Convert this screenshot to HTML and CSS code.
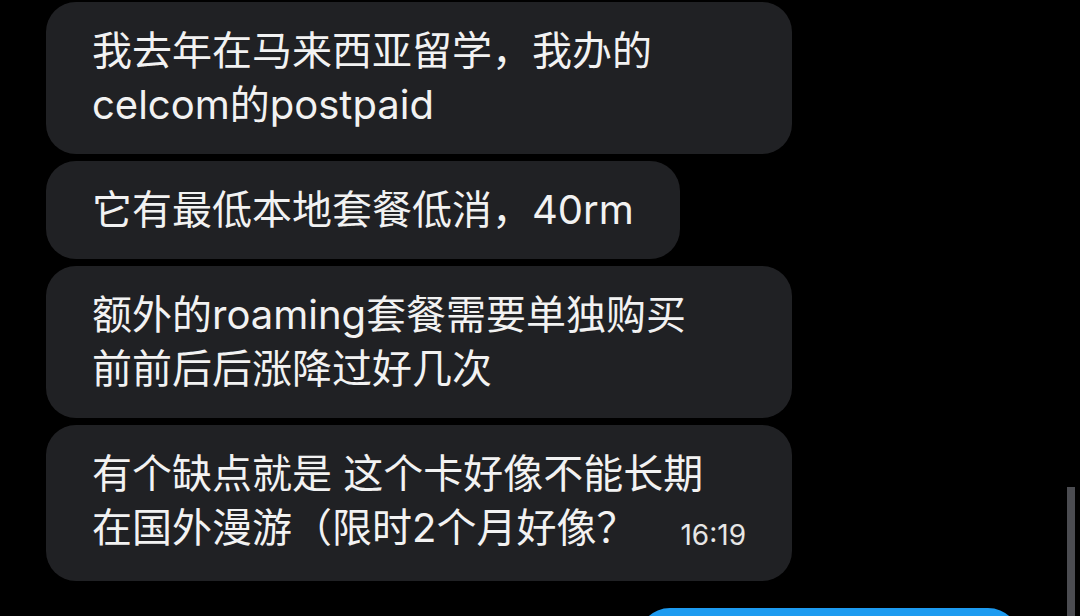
FILE: index.html
```html
<!DOCTYPE html>
<html lang="zh-CN">
    <head>
        <title>Messages</title>
        <meta charset="utf-8" />
        <meta name="viewport" content="width=device-width, initial-scale=1">
        <link rel="stylesheet" href="styles.css">
    </head>
    <body>
        <div class="thread">
            <div class="bubble wide">我去年在马来西亚留学，我办的<br>celcom的postpaid</div>
            <div class="bubble">它有最低本地套餐低消，40rm</div>
            <div class="bubble wide">额外的roaming套餐需要单独购买<br>前前后后涨降过好几次</div>
            <div class="bubble wide">
                有个缺点就是 这个卡好像不能长期
                <div class="last-line">
                    <span>在国外漫游（限时2个月好像？</span>
                    <span class="time">16:19</span>
                </div>
            </div>
            <div class="mine"></div>
        </div>
        <div class="scroll-thumb"></div>
    </body>
</html>
```
FILE: styles.css
```css
html, body { height: 100%; }
body {
    margin: 0;
    background-color: black;
    color: #f2f2f2;
    font-family: "Inter", "Noto Sans CJK SC", sans-serif;
    overflow: hidden;
}
.thread {
    display: flex;
    flex-direction: column;
    align-items: flex-start;
    gap: 7px;
    padding: 2px 60px 0 46px;
}
.bubble {
    background-color: #202124;
    border-radius: 30px;
    padding: 22px 46px;
    font-size: 40px;
    line-height: 54px;
    white-space: nowrap;
}
.bubble.wide { width: 746px; box-sizing: border-box; }
.last-line {
    display: flex;
    justify-content: space-between;
    align-items: baseline;
}
.time {
    font-size: 28px;
    color: #e6e6e6;
    position: relative;
    top: 3px;
}
.mine {
    align-self: flex-end;
    margin-top: 20px;
    width: 382px;
    height: 40px;
    background-color: #1d9bf0;
    border-radius: 32px 32px 0 0;
}
.scroll-thumb {
    position: absolute;
    left: 1067px;
    top: 487px;
    width: 8px;
    height: 129px;
    background-color: #4b4c51;
}
```
